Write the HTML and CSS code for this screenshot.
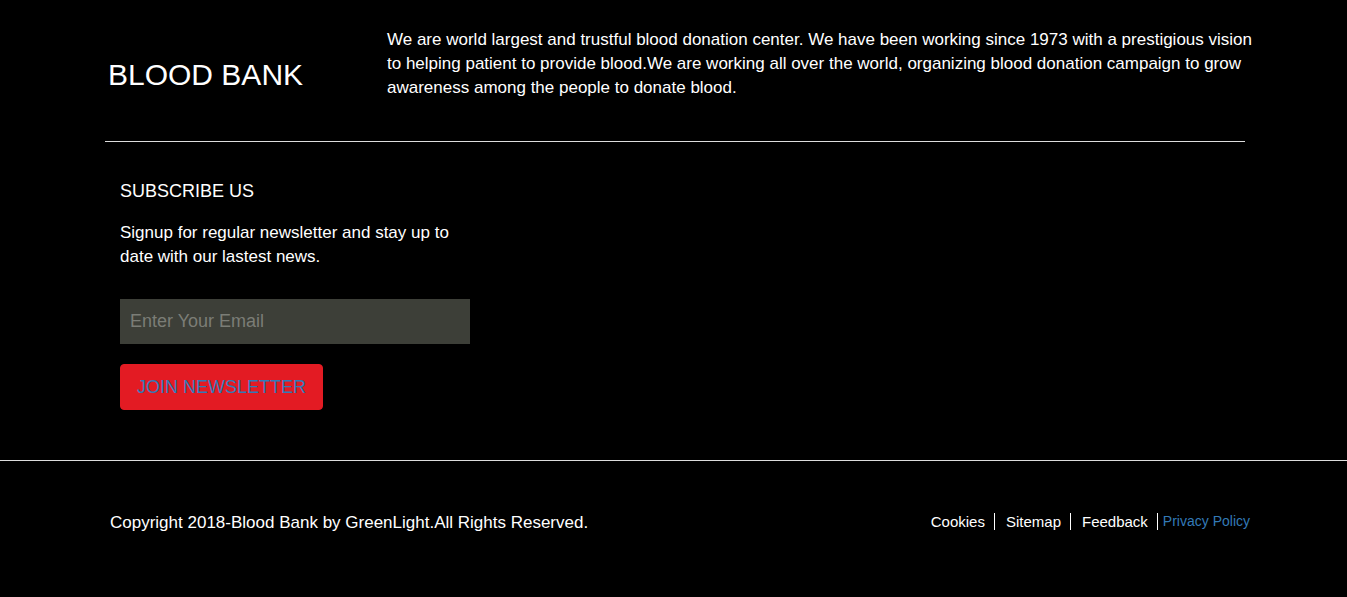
FILE: index.html
```html
<!DOCTYPE html>
<html>
<head>
<meta charset="utf-8">
<link rel="stylesheet" href="styles.css">
</head>
<body>
<footer class="site-footer">
  <div class="container">
    <div class="about-row">
      <h2 class="brand">BLOOD BANK</h2>
      <p class="about-text">We are world largest and trustful blood donation center. We have been working since 1973 with a prestigious vision to helping patient to provide blood.We are working all over the world, organizing blood donation campaign to grow awareness among the people to donate blood.</p>
    </div>
    <hr class="divider">
    <div class="subscribe">
      <h4 class="subscribe-title">SUBSCRIBE US</h4>
      <p class="subscribe-text">Signup for regular newsletter and stay up to date with our lastest news.</p>
      <input class="email-input" type="email" placeholder="Enter Your Email">
      <button class="join-btn" type="button">JOIN NEWSLETTER</button>
    </div>
  </div>
  <div class="bottom-bar">
    <div class="bottom-inner">
      <p class="copyright">Copyright 2018-Blood Bank by GreenLight.All Rights Reserved.</p>
      <ul class="links">
        <li class="link-item">Cookies</li>
        <li class="link-item">Sitemap</li>
        <li class="link-item">Feedback</li>
        <li class="link-item link-blue">Privacy Policy</li>
      </ul>
    </div>
  </div>
</footer>
</body>
</html>
```

FILE: styles.css
```css
* { box-sizing: border-box; }
html, body { margin: 0; padding: 0; background: #000; }
body {
  font-family: "Liberation Sans", Arial, sans-serif;
  color: #fff;
  width: 1347px;
  height: 597px;
  overflow: hidden;
}
.site-footer { background: #000; }
.container {
  width: 1140px;
  margin-left: 105px;
  padding-top: 28px;
}
.about-row {
  display: grid;
  grid-template-columns: 282px 880px;
  align-items: start;
}
.brand {
  margin: 30px 0 0 0;
  padding-left: 3px;
  font-size: 30px;
  font-weight: normal;
  line-height: 34px;
}
.about-text {
  margin: 0;
  font-size: 17px;
  line-height: 24px;
}
.divider {
  margin: 41px 0 0 0;
  border: 0;
  border-top: 1px solid #ddd;
  height: 0;
}
.subscribe {
  padding: 39px 15px 0 15px;
  display: flex;
  flex-direction: column;
  align-items: flex-start;
}
.subscribe-title {
  margin: 0;
  font-size: 18px;
  font-weight: normal;
  line-height: 20px;
}
.subscribe-text {
  margin: 20px 0 0 0;
  width: 345px;
  font-size: 17px;
  line-height: 24px;
}
.email-input {
  margin-top: 30px;
  width: 350px;
  height: 45px;
  border: 0;
  background: #3d3f38;
  padding: 0 10px;
  font-family: "Liberation Sans", Arial, sans-serif;
  font-size: 18px;
  color: #fff;
  outline: none;
}
.email-input::placeholder { color: #7b7d76; }
.join-btn {
  margin-top: 20px;
  height: 46px;
  padding: 0 16px;
  border: 1px solid #e31b23;
  border-radius: 4px;
  background: #e31b23;
  color: #337ab7;
  font-family: "Liberation Sans", Arial, sans-serif;
  font-size: 18px;
}
.bottom-bar {
  margin-top: 50px;
  border-top: 1px solid #ddd;
}
.bottom-inner {
  margin-left: 110px;
  width: 1140px;
  padding-top: 50px;
  display: flex;
  justify-content: space-between;
  align-items: center;
}
.copyright {
  margin: 0;
  font-size: 17px;
  line-height: 24px;
}
.links {
  list-style: none;
  margin: -3px 0 0 0;
  padding: 0;
  display: flex;
  align-items: center;
}
.link-item {
  font-size: 15px;
  line-height: 17px;
  padding: 0 9px 0 11px;
  border-right: 1px solid #fff;
}
.link-item:first-child { padding-left: 0; }
.link-item.link-blue {
  border-right: 0;
  padding: 0 0 0 5px;
  font-size: 14px;
  color: #337ab7;
}
```
